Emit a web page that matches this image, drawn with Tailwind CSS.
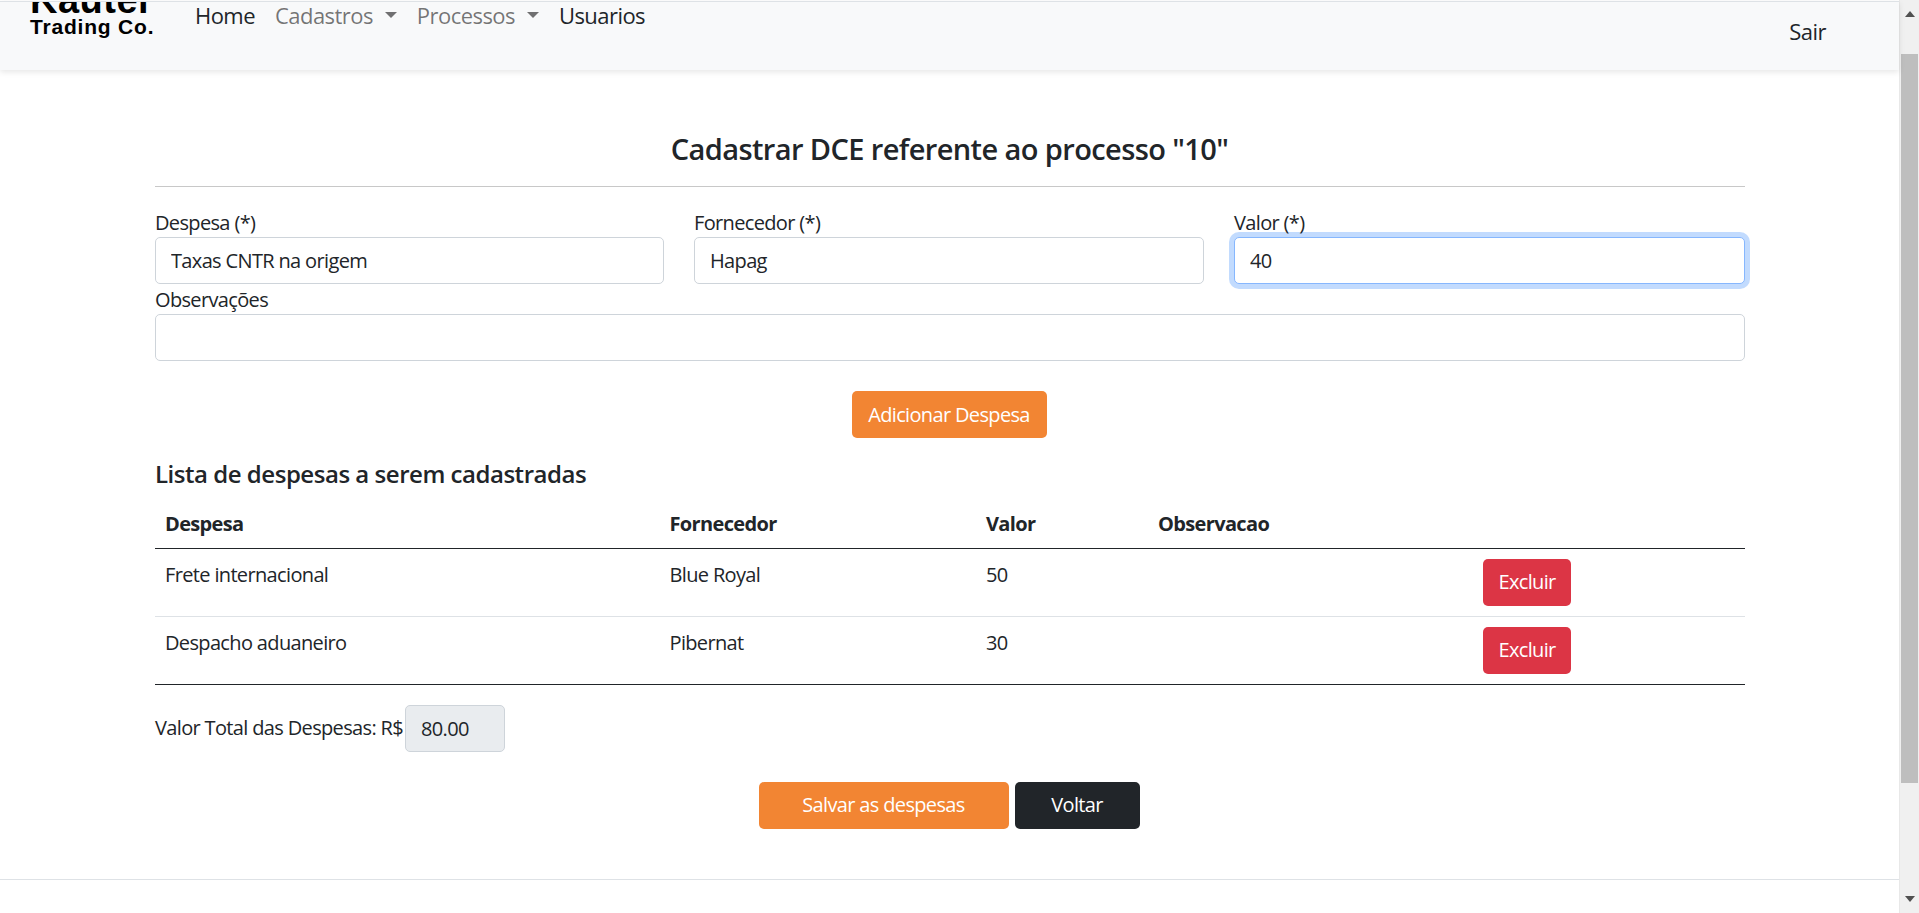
<!DOCTYPE html>
<html lang="pt-BR">
<head>
    <meta charset="UTF-8">
    <title>Cadastrar DCE</title>
    <script src="https://cdn.jsdelivr.net/npm/@tailwindcss/browser@4"></script>
</head>
<body class="h-[913px] overflow-hidden flex bg-white text-[#212529] text-[20px] font-['Open_Sans','Noto_Sans',sans-serif] tracking-[-0.65px]">
    <div class="flex-1 min-w-0 flex flex-col">
        <!-- navbar -->
        <nav class="h-[69px] mt-px border-t border-[#dee2e6] bg-[#f8f9fa] shadow-[0_2px_6px_rgba(0,0,0,0.1)] flex relative z-10 overflow-hidden text-[22px] tracking-[-0.55px]">
            <div class="w-[160px] pl-[30px] shrink-0 flex flex-col font-['Liberation_Sans',sans-serif] font-bold text-black">
                <span class="text-[38px] leading-[38px] -mt-[21px] tracking-[0.5px]">Kauter</span>
                <span class="text-[21px] leading-[15px] tracking-[0.8px] whitespace-nowrap">Trading Co.</span>
            </div>
            <a class="ml-[35px] mt-[-2px] leading-[30px] h-[30px]">Home</a>
            <a class="ml-[20px] mt-[-2px] leading-[30px] h-[30px] text-black/55 flex items-center">Cadastros<span class="ml-[12px] w-0 h-0 border-x-[6px] border-x-transparent border-t-[6px] border-t-black/55"></span></a>
            <a class="ml-[20px] mt-[-2px] leading-[30px] h-[30px] text-black/55 flex items-center">Processos<span class="ml-[12px] w-0 h-0 border-x-[6px] border-x-transparent border-t-[6px] border-t-black/55"></span></a>
            <a class="ml-[20px] mt-[-2px] leading-[30px] h-[30px]">Usuarios</a>
            <a class="ml-auto mr-[73px] mt-[14px] leading-[30px] h-[30px]">Sair</a>
        </nav>

        <main class="ml-[155px] mr-[154px] flex flex-col">
            <h4 class="mt-[61px] text-center text-[29px] leading-[36px] font-semibold tracking-[-0.6px] pr-[1px]">Cadastrar DCE referente ao processo "10"</h4>
            <hr class="mt-[19px] border-t border-[#c8c8c8]">

            <div class="mt-[20px] grid grid-cols-[509px_510px_1fr] gap-x-[30px]">
                <div>
                    <label class="block h-[30px] leading-[32px]">Despesa (*)</label>
                    <input value="Taxas CNTR na origem" class="block w-full h-[47px] px-[15px] border border-[#ced4da] rounded-[5px] bg-white">
                </div>
                <div>
                    <label class="block h-[30px] leading-[32px]">Fornecedor (*)</label>
                    <input value="Hapag" class="block w-full h-[47px] px-[15px] border border-[#ced4da] rounded-[5px] bg-white">
                </div>
                <div>
                    <label class="block h-[30px] leading-[32px]">Valor (*)</label>
                    <input value="40" class="block w-full h-[47px] px-[15px] border border-[#86b7fe] rounded-[5px] bg-white shadow-[0_0_0_5px_rgba(13,110,253,0.25)]">
                </div>
            </div>
            <div>
                <label class="block h-[30px] leading-[32px]">Observações</label>
                <input class="block w-full h-[47px] px-[15px] border border-[#ced4da] rounded-[5px] bg-white">
            </div>

            <div class="mt-[30px] flex justify-center pr-[2px]">
                <button class="h-[47px] w-[195px] bg-[#f28533] text-white rounded-[5px]">Adicionar Despesa</button>
            </div>

            <h5 class="mt-[21px] text-[24px] leading-[30px] font-semibold tracking-[-0.47px]">Lista de despesas a serem cadastradas</h5>

            <table class="mt-[11px] w-full table-fixed border-collapse">
                <thead>
                    <tr class="h-[48px] border-b border-[#212529] text-left">
                        <th class="w-[504.5px] px-[10px] font-bold">Despesa</th>
                        <th class="w-[316.5px] px-[10px] font-bold">Fornecedor</th>
                        <th class="w-[172px] px-[10px] font-bold">Valor</th>
                        <th class="w-[325px] px-[10px] font-bold">Observacao</th>
                        <th class="px-[10px]"></th>
                    </tr>
                </thead>
                <tbody>
                    <tr class="h-[68px] border-b border-[#dee2e6] align-top">
                        <td class="px-[10px] pt-[11px] leading-[30px]">Frete internacional</td>
                        <td class="px-[10px] pt-[11px] leading-[30px]">Blue Royal</td>
                        <td class="px-[10px] pt-[11px] leading-[30px]">50</td>
                        <td class="px-[10px]"></td>
                        <td class="px-[10px] pt-[10px]"><button class="h-[47px] w-[88px] bg-[#dc3545] text-white rounded-[5px]">Excluir</button></td>
                    </tr>
                    <tr class="h-[68px] border-b border-[#212529] align-top">
                        <td class="px-[10px] pt-[11px] leading-[30px]">Despacho aduaneiro</td>
                        <td class="px-[10px] pt-[11px] leading-[30px]">Pibernat</td>
                        <td class="px-[10px] pt-[11px] leading-[30px]">30</td>
                        <td class="px-[10px]"></td>
                        <td class="px-[10px] pt-[10px]"><button class="h-[47px] w-[88px] bg-[#dc3545] text-white rounded-[5px]">Excluir</button></td>
                    </tr>
                </tbody>
            </table>

            <div class="mt-[20px] flex items-center">
                <span>Valor Total das Despesas: R$</span>
                <input value="80.00" disabled class="ml-[2px] w-[100px] h-[47px] px-[15px] border border-[#ced4da] rounded-[5px] bg-[#e9ecef] text-[#212529]">
            </div>

            <div class="mt-[30px] flex justify-center gap-[6px] pr-[2px]">
                <button class="h-[47px] w-[250px] bg-[#f28533] text-white rounded-[5px]">Salvar as despesas</button>
                <button class="h-[47px] w-[125px] bg-[#212529] text-white rounded-[5px]">Voltar</button>
            </div>
        </main>

        <footer class="mt-[50px] border-t border-[#dee2e6]"></footer>
    </div>

    <!-- scrollbar -->
    <div class="w-[20px] shrink-0 h-full bg-[#f0f0f0] border-l border-[#e8e8e8] flex flex-col items-center relative">
        <div class="h-[54px] w-full flex justify-center pt-[11px]">
            <span class="w-0 h-0 border-x-[5px] border-x-transparent border-b-[6px] border-b-[#505050]"></span>
        </div>
        <div class="h-[729px] w-[17px] bg-[#bebebe]"></div>
        <div class="mt-auto h-[20px] w-full flex justify-center pt-[3px]">
            <span class="w-0 h-0 border-x-[5px] border-x-transparent border-t-[6px] border-t-[#505050]"></span>
        </div>
    </div>
</body>
</html>
